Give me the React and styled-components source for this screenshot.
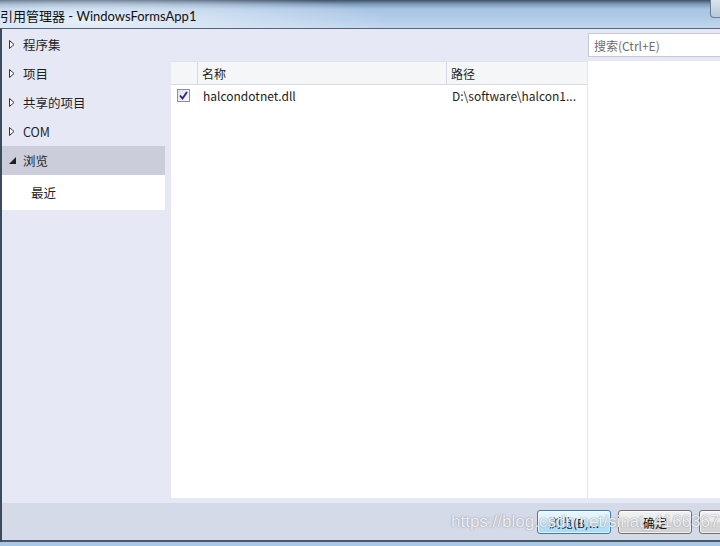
import React from 'react'
import styled, { createGlobalStyle } from 'styled-components'

const uiFont = '"Noto Sans CJK SC", "Noto Sans", "Liberation Sans", sans-serif'

const Global = createGlobalStyle`
  html, body { margin:0; padding:0; overflow:hidden; background:#a9c8e8; }
  body { font-family:${uiFont}; font-size:12px; color:#1e1e1e; }
  * { box-sizing:border-box; }
`

const Window = styled.div`
  width:720px;
  height:546px;
  display:flex;
  flex-direction:column;
  overflow:hidden;
  background:#a9c8e8;
  padding-bottom:4px;
`

const TitleBar = styled.div`
  height:28px;
  flex:none;
  display:flex;
  align-items:center;
  justify-content:space-between;
  background:
    radial-gradient(ellipse 300px 30px at 90px 20px, rgba(235,242,250,0.95), rgba(235,242,250,0) 100%),
    linear-gradient(180deg, #3f5166 0px, #7d98b6 4px, #a7c4e4 9px, #b3cdea 20px, #c3d8ee 28px);
`

const Title = styled.div`
  font-family:"Lato", "Noto Sans CJK SC", sans-serif;
  font-size:13px;
  color:#111;
  margin-top:2px;
`

const CaptionStub = styled.div`
  width:10px;
  height:18px;
  align-self:flex-start;
  border:1px solid #6b7c8f;
  border-right:none;
  border-top:none;
  border-radius:0 0 0 4px;
  background:linear-gradient(180deg, #d9e3ee, #b7c7da);
`

const Frame = styled.div`
  flex:1;
  display:flex;
  flex-direction:column;
  border-top:1px solid #56667a;
  border-left:2px solid #3c4b5c;
  background:#e6e9f5;
  min-height:0;
`

const Main = styled.div`
  flex:1;
  display:flex;
  min-height:0;
  padding-bottom:5px;
`

const Sidebar = styled.div`
  width:163px;
  flex:none;
  padding-top:1px;
  display:flex;
  flex-direction:column;
`

const NavItem = styled.div`
  height:${p => (p.$sub ? 35 : 29)}px;
  display:flex;
  align-items:center;
  padding-left:${p => (p.$sub ? 29 : 7)}px;
  background:${p => (p.$selected ? '#cbcdda' : p.$sub ? '#ffffff' : 'transparent')};
  font-size:12.5px;
  color:#1e1e1e;
`

const Arrow = styled.span`
  width:14px;
  display:inline-flex;
  align-items:center;
`

const Content = styled.div`
  flex:1;
  margin-left:6px;
  display:flex;
  flex-direction:column;
  min-width:0;
`

const SearchRow = styled.div`
  height:24px;
  margin-top:4px;
  margin-bottom:4px;
  display:flex;
  justify-content:flex-end;
`

const SearchBox = styled.div`
  width:132px;
  height:24px;
  border:1px solid #c5c9d6;
  border-right:none;
  background:#fff;
  color:#6d6d6d;
  font-size:12px;
  display:flex;
  align-items:center;
  padding-left:5px;
`

const Panes = styled.div`
  flex:1;
  display:flex;
  min-height:0;
`

const Table = styled.div`
  width:416px;
  flex:none;
  background:#fff;
  display:flex;
  flex-direction:column;
  border-top:1px solid #e0e3ec;
`

const HeaderRow = styled.div`
  height:23px;
  display:grid;
  grid-template-columns:27px 249px 1fr;
  background:#f5f6f8;
  border-bottom:1px solid #d9dbe4;
`

const HeaderCell = styled.div`
  display:flex;
  align-items:center;
  padding-left:4px;
  border-right:${p => (p.$last ? 'none' : '1px solid #d6d8e0')};
  font-size:12px;
  color:#1e1e1e;
`

const Row = styled.div`
  height:20px;
  display:grid;
  grid-template-columns:27px 249px 1fr;
  align-items:center;
`

const Cell = styled.div`
  padding-left:5px;
  white-space:nowrap;
  overflow:hidden;
  font-size:12px;
  color:${p => (p.$dark ? '#1a1a1a' : '#1e1e1e')};
`

const CheckBox = styled.div`
  width:13px;
  height:13px;
  margin-left:6px;
  border:1px solid #8e8f99;
  background:linear-gradient(135deg, #dfe2ea, #f6f7fa);
  display:flex;
  align-items:center;
  justify-content:center;
`

const DetailPane = styled.div`
  flex:1;
  background:#fff;
  border-left:1px solid #e4e6ee;
`

const Footer = styled.div`
  height:39px;
  flex:none;
  background:#d5dae8;
  display:flex;
  align-items:center;
  gap:7px;
  padding-left:535px;
  padding-top:1px;
  position:relative;
  border-bottom:2px solid #4a5868;
`

const Button = styled.div`
  width:74px;
  height:24px;
  flex:none;
  border:1px solid ${p => (p.$default ? '#3d7bad' : '#707070')};
  border-radius:3px;
  background:${p => (p.$default
    ? 'linear-gradient(180deg, #eaf6fd 0%, #d9f0fc 50%, #bee6fd 51%, #a7d9f5 100%)'
    : 'linear-gradient(180deg, #f2f2f2 0%, #ebebeb 50%, #dddddd 51%, #cfcfcf 100%)')};
  box-shadow:inset 0 0 0 1px rgba(255,255,255,0.7);
  display:flex;
  align-items:center;
  justify-content:center;
  font-size:12px;
  color:#111;
`

const Watermark = styled.div`
  position:absolute;
  left:449px;
  top:9px;
  font-family:"Liberation Sans", Arial, sans-serif;
  font-size:17px;
  color:rgba(255,255,255,0.88);
  text-shadow:0 0 1px rgba(110,120,140,0.85), 0 0 2px rgba(150,160,180,0.5);
  white-space:nowrap;
  pointer-events:none;
`

const Collapsed = () => (
  <svg width="6" height="9" viewBox="0 0 6 9">
    <path d="M0.5 0.5 L5 4.5 L0.5 8.5 Z" fill="#fff" stroke="#333" strokeWidth="1" />
  </svg>
)

const Expanded = () => (
  <svg width="7" height="7" viewBox="0 0 7 7">
    <path d="M7 0 L7 7 L0 7 Z" fill="#1e1e1e" />
  </svg>
)

const Check = () => (
  <svg width="9" height="9" viewBox="0 0 9 9">
    <path d="M1 4.5 L3.5 7.5 L8 1" fill="none" stroke="#23238c" strokeWidth="1.8" />
  </svg>
)

const navItems = [
  { label: '程序集' },
  { label: '项目' },
  { label: '共享的项目' },
  { label: 'COM' },
  { label: '浏览', open: true }
]

export default function App() {
  return (
    <Window>
      <Global />
      <TitleBar>
        <Title>引用管理器 - WindowsFormsApp1</Title>
        <CaptionStub />
      </TitleBar>
      <Frame>
        <Main>
          <Sidebar>
            {navItems.map(item => (
              <NavItem key={item.label} $selected={item.open}>
                <Arrow>{item.open ? <Expanded /> : <Collapsed />}</Arrow>
                {item.label}
              </NavItem>
            ))}
            <NavItem $sub>最近</NavItem>
          </Sidebar>
          <Content>
            <SearchRow>
              <SearchBox>搜索(Ctrl+E)</SearchBox>
            </SearchRow>
            <Panes>
              <Table>
                <HeaderRow>
                  <HeaderCell />
                  <HeaderCell>名称</HeaderCell>
                  <HeaderCell $last>路径</HeaderCell>
                </HeaderRow>
                <Row>
                  <CheckBox><Check /></CheckBox>
                  <Cell $dark>halcondotnet.dll</Cell>
                  <Cell>D:\software\halcon1...</Cell>
                </Row>
              </Table>
              <DetailPane />
            </Panes>
          </Content>
        </Main>
        <Footer>
          <Button $default>浏览(B)...</Button>
          <Button>确定</Button>
          <Button>取消</Button>
          <Watermark>https://blog.csdn.net/sinat_41663673</Watermark>
        </Footer>
      </Frame>
    </Window>
  )
}
